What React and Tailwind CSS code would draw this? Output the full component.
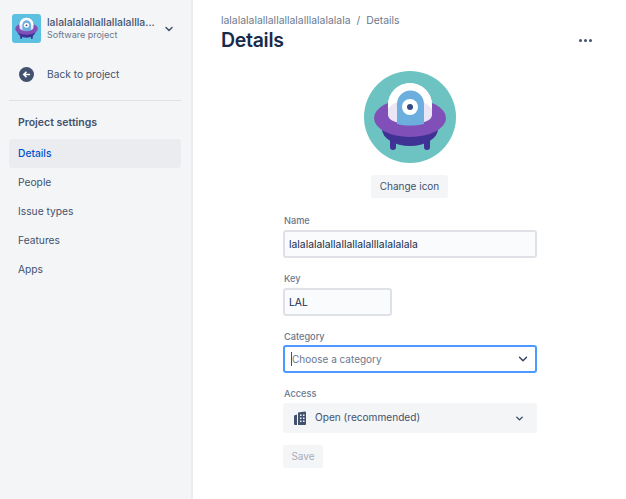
import React from "react";
import { ChevronDown } from "lucide-react";

const navItems = ["Details", "People", "Issue types", "Features", "Apps"];

function ProjectArt({ size }) {
  return (
    <svg width={size} height={size} viewBox="0 0 92 92" className="block">
      <path d="M26 62 h6 v14 a3 3 0 0 1 -6 0z M60 62 h6 v14 a3 3 0 0 1 -6 0z" fill="#403294" />
      <ellipse cx="46" cy="58" rx="28" ry="17" fill="#403294" />
      <ellipse cx="46" cy="47" rx="36" ry="19" fill="#8050b8" />
      <path d="M24 44 V34 a22 22 0 0 1 44 0 V44 C68 56 24 56 24 44z" fill="#eae6f5" />
      <path d="M24 38 V34 a22 22 0 0 1 44 0 V38 C60 26 32 26 24 38z" fill="#fff" />
      <path d="M33 53 V33 a13.5 13.5 0 0 1 27 0 V53 C50 55 42 55 33 53z" fill="#6cafde" />
      <circle cx="46" cy="36" r="8" fill="#fff" />
      <circle cx="46" cy="36" r="3" fill="#344a80" />
    </svg>
  );
}

function Label({ children }) {
  return <div className="pl-px text-[9.2px] leading-[14px] font-medium text-[#6b778c]">{children}</div>;
}

export default function App() {
  return (
    <div className="flex h-[499px] w-[626px] overflow-hidden bg-white font-['Inter',sans-serif] text-[#172b4d]">
      <aside className="w-[193px] shrink-0 border-r-[2px] border-[#ebecf0] bg-[#f4f5f7] pl-[9px] pr-[10px]">
        <div className="flex items-center pt-[14px] pl-[3px]">
          <div className="flex h-[29px] w-[29px] items-center justify-center overflow-hidden rounded-[3px] bg-[#5cc0e0]">
            <ProjectArt size={29} />
          </div>
          <div className="ml-[6px] w-[108px]">
            <div className="whitespace-nowrap text-[10.4px] leading-[13px] font-medium text-[#42526e]">lalalalalallallallalallla...</div>
            <div className="text-[9px] leading-[12px] text-[#6b778c]">Software project</div>
          </div>
          <ChevronDown size={12} strokeWidth={3} className="ml-[8px] text-[#42526e]" />
        </div>
        <div className="flex items-center pt-[24px] pl-[10px] pb-[18px]">
          <div className="flex h-[15px] w-[15px] items-center justify-center rounded-full bg-[#42526e]">
            <svg width="9" height="9" viewBox="0 0 10 10" fill="none" stroke="#fff" strokeWidth="1.8">
              <path d="M9 5H2M5 2 2 5l3 3" />
            </svg>
          </div>
          <span className="ml-[13px] text-[10.2px] leading-[15px] text-[#42526e]">Back to project</span>
        </div>
        <div className="h-px bg-[#dfe1e6]" />
        <div className="pl-[9px] pt-[15px] pb-[9px] text-[10.5px] leading-[14px] font-semibold text-[#42526e]">Project settings</div>
        <nav className="flex flex-col">
          {navItems.map((item, i) => (
            <div
              key={item}
              className={`h-[29px] rounded-[3px] pl-[9px] text-[10.25px] leading-[29px] ${i === 0 ? "bg-[#ebecf0] font-medium text-[#0052cc]" : "text-[#42526e]"}`}
            >
              {item}
            </div>
          ))}
        </nav>
      </aside>

      <main className="min-w-0 flex-1 pl-[28px] pr-[26px]">
        <div className="flex items-center pt-[14px] text-[10.4px] leading-[13px] text-[#6b778c]">
          <span>lalalalalallallallalalllalalalala</span>
          <span className="mx-[6px]">/</span>
          <span>Details</span>
        </div>
        <div className="flex items-center justify-between pt-px pr-[8px]">
          <h1 className="text-[19.5px] leading-[24px] font-semibold tracking-[-0.3px] text-[#172b4d]">Details</h1>
          <div className="flex gap-[2px]">
            <span className="h-[3px] w-[3px] rounded-full bg-[#42526e]" />
            <span className="h-[3px] w-[3px] rounded-full bg-[#42526e]" />
            <span className="h-[3px] w-[3px] rounded-full bg-[#42526e]" />
          </div>
        </div>

        <div className="flex flex-col items-center pt-[19px] pr-[2px]">
          <div className="h-[92px] w-[92px] overflow-hidden rounded-full bg-[#6cc3c1]">
            <ProjectArt size={92} />
          </div>
          <button className="mt-[12px] h-[23px] w-[77px] rounded-[3px] bg-[#f4f5f7] text-[10px] leading-[23px] text-[#42526e]">Change icon</button>
        </div>

        <form className="ml-[62px] w-[254px] pt-[16px]">
          <Label>Name</Label>
          <div className="mt-[2px] h-[28px] rounded-[3px] border-2 border-[#dfe1e6] bg-[#fafbfc] pl-[4px] text-[10.35px] leading-[24px]">lalalalalallallallalalllalalalala</div>

          <div className="pt-[14px]"><Label>Key</Label></div>
          <div className="mt-[2px] h-[28px] w-[109px] rounded-[3px] border-2 border-[#dfe1e6] bg-[#fafbfc] pl-[4px] text-[10.35px] leading-[24px]">LAL</div>

          <div className="pt-[14px]"><Label>Category</Label></div>
          <div className="mt-px flex h-[28px] items-center justify-between rounded-[3px] border-2 border-[#4c9aff] bg-white pl-[6px] pr-[5px] text-[10px] text-[#6b778c]">
            <span className="border-l border-[#42526e] leading-[14px]">Choose a category</span>
            <ChevronDown size={14} strokeWidth={2.5} className="text-[#344563]" />
          </div>

          <div className="pt-[14px]"><Label>Access</Label></div>
          <div className="mt-[2px] flex h-[30px] items-center rounded-[3px] bg-[#f4f5f7] pl-[10px] pr-[12px] text-[10.1px] text-[#42526e]">
            <svg width="14" height="14" viewBox="0 0 14 14">
              <path d="M5 1.5 12 0.5a1 1 0 0 1 1 1V13a1 1 0 0 1-1 1H5zM1 4.5 4 3.5V14H2a1 1 0 0 1-1-1z" fill="#42526e" />
              <path d="M7 3.5h1.5V5H7zM10 3.5h1.5V5H10zM7 6.5h1.5V8H7zM10 6.5h1.5V8H10zM7 9.5h1.5V11H7zM10 9.5h1.5V11H10z" fill="#f4f5f7" />
            </svg>
            <span className="ml-[8px] flex-1">Open (recommended)</span>
            <ChevronDown size={11} strokeWidth={3} className="text-[#344563]" />
          </div>

          <button type="button" className="mt-[12px] block h-[23px] w-[40px] rounded-[3px] bg-[#f4f5f7] text-[10px] leading-[23px] text-[#a5adba]">Save</button>
        </form>
      </main>
    </div>
  );
}
